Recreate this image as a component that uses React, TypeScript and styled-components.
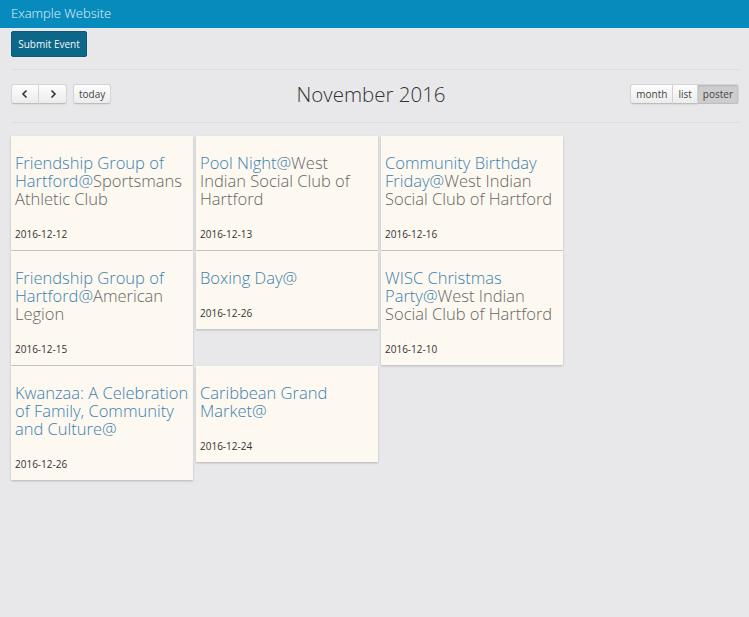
import React from 'react';
import styled, { createGlobalStyle } from 'styled-components';

interface EventItem {
  title: string;
  venue: string;
  date: string;
}

const rows: EventItem[][] = [
  [
    { title: 'Friendship Group of Hartford', venue: 'Sportsmans Athletic Club', date: '2016-12-12' },
    { title: 'Pool Night', venue: 'West Indian Social Club of Hartford', date: '2016-12-13' },
    { title: 'Community Birthday Friday', venue: 'West Indian Social Club of Hartford', date: '2016-12-16' },
  ],
  [
    { title: 'Friendship Group of Hartford', venue: 'American Legion', date: '2016-12-15' },
    { title: 'Boxing Day', venue: '', date: '2016-12-26' },
    { title: 'WISC Christmas Party', venue: 'West Indian Social Club of Hartford', date: '2016-12-10' },
  ],
  [
    { title: 'Kwanzaa: A Celebration of Family, Community and Culture', venue: '', date: '2016-12-26' },
    { title: 'Caribbean Grand Market', venue: '', date: '2016-12-24' },
  ],
];

const App: React.FC = () => {
  return (
    <>
      <GlobalStyle />
      <Header>Example Website</Header>
      <Main>
        <SubmitButton>Submit Event</SubmitButton>
        <Rule />
        <Toolbar>
          <Left>
            <ButtonGroup>
              <ToolButton narrow>
                <Chevron viewBox="0 0 8 10">
                  <path d="M5.5 1.5 L2 5 L5.5 8.5" />
                </Chevron>
              </ToolButton>
              <ToolButton narrow>
                <Chevron viewBox="0 0 8 10">
                  <path d="M2.5 1.5 L6 5 L2.5 8.5" />
                </Chevron>
              </ToolButton>
            </ButtonGroup>
            <ToolButton>today</ToolButton>
          </Left>
          <MonthTitle>November 2016</MonthTitle>
          <Right>
            <ButtonGroup>
              <ToolButton>month</ToolButton>
              <ToolButton>list</ToolButton>
              <ToolButton active>poster</ToolButton>
            </ButtonGroup>
          </Right>
        </Toolbar>
        <Rule />
        <Poster>
          {rows.map((row, r) => (
            <Row key={r}>
              {row.map((ev, i) => (
                <Card key={i}>
                  <Title>
                    <Link>{ev.title}@</Link>
                    {ev.venue}
                  </Title>
                  <DateText>{ev.date}</DateText>
                </Card>
              ))}
            </Row>
          ))}
        </Poster>
      </Main>
    </>
  );
};

export default App;

const GlobalStyle = createGlobalStyle`
  html, body {
    margin: 0;
    padding: 0;
    background: #e8e7ea;
    font-family: "Open Sans", "Liberation Sans", sans-serif;
    color: #333;
  }
  body {
    min-height: 617px;
  }
`;

const Header = styled.div`
  height: 28px;
  background: #078bbc;
  color: #e6f3f9;
  font-size: 13px;
  font-weight: 300;
  line-height: 27px;
  padding-left: 11px;
`;

const Main = styled.div`
  padding: 3px 10px 0 11px;
`;

const SubmitButton = styled.button`
  display: block;
  width: 76px;
  height: 26px;
  padding: 0;
  background: #0c6788;
  border: 1px solid #0a5a78;
  border-radius: 2px;
  color: #f2f7fa;
  font-family: inherit;
  font-size: 10px;
  font-weight: 500;
`;

const Rule = styled.div`
  height: 1px;
  background: #dcdbde;
  margin-top: 12px;
`;

const Toolbar = styled.div`
  display: flex;
  align-items: center;
  justify-content: space-between;
  height: 24px;
  margin: 12px 0 16px;
`;

const Left = styled.div`
  display: flex;
  gap: 6px;
  width: 200px;
`;

const Right = styled.div`
  display: flex;
  justify-content: flex-end;
  width: 208px;
`;

const ButtonGroup = styled.div`
  display: flex;
  & > button {
    border-radius: 0;
  }
  & > button + button {
    border-left: none;
  }
  & > button:first-child {
    border-radius: 3px 0 0 3px;
  }
  & > button:last-child {
    border-radius: 0 3px 3px 0;
  }
`;

const ToolButton = styled.button<{ narrow?: boolean; active?: boolean }>`
  height: 20px;
  padding: 0 ${p => (p.narrow ? '0' : '5px')};
  width: ${p => (p.narrow ? '28px' : 'auto')};
  display: flex;
  align-items: center;
  justify-content: center;
  font-family: inherit;
  font-size: 10px;
  color: #444;
  border: 1px solid #d4d4d4;
  border-bottom-color: #bdbdbd;
  border-radius: 3px;
  background: ${p => (p.active ? '#cdcccf' : 'linear-gradient(#fdfdfd, #ececec)')};
  box-shadow: ${p => (p.active ? 'inset 0 1px 2px rgba(0,0,0,0.12)' : '0 1px 1px rgba(0,0,0,0.06)')};
`;

const Chevron = styled.svg`
  width: 8px;
  height: 10px;
  fill: none;
  stroke: #333;
  stroke-width: 1.6;
`;

const MonthTitle = styled.h2`
  margin: 0;
  font-size: 20.5px;
  font-weight: 300;
  line-height: 22px;
  color: #333;
`;

const Poster = styled.div`
  display: flex;
  flex-direction: column;
  gap: 1px;
  padding-top: 13px;
`;

const Row = styled.div`
  display: flex;
  gap: 3px;
  align-items: flex-start;
`;

const Card = styled.div`
  width: 182px;
  box-sizing: border-box;
  background: #fdf8f0;
  padding: 18px 4px 10px 4px;
  box-shadow: 0 1px 2px rgba(0, 0, 0, 0.22);
`;

const Title = styled.div`
  font-size: 16.5px;
  font-weight: 300;
  line-height: 18px;
  color: #666;
`;

const Link = styled.span`
  color: #3a82b0;
`;

const DateText = styled.div`
  margin-top: 20px;
  font-size: 10px;
  line-height: 12px;
  color: #333;
`;
